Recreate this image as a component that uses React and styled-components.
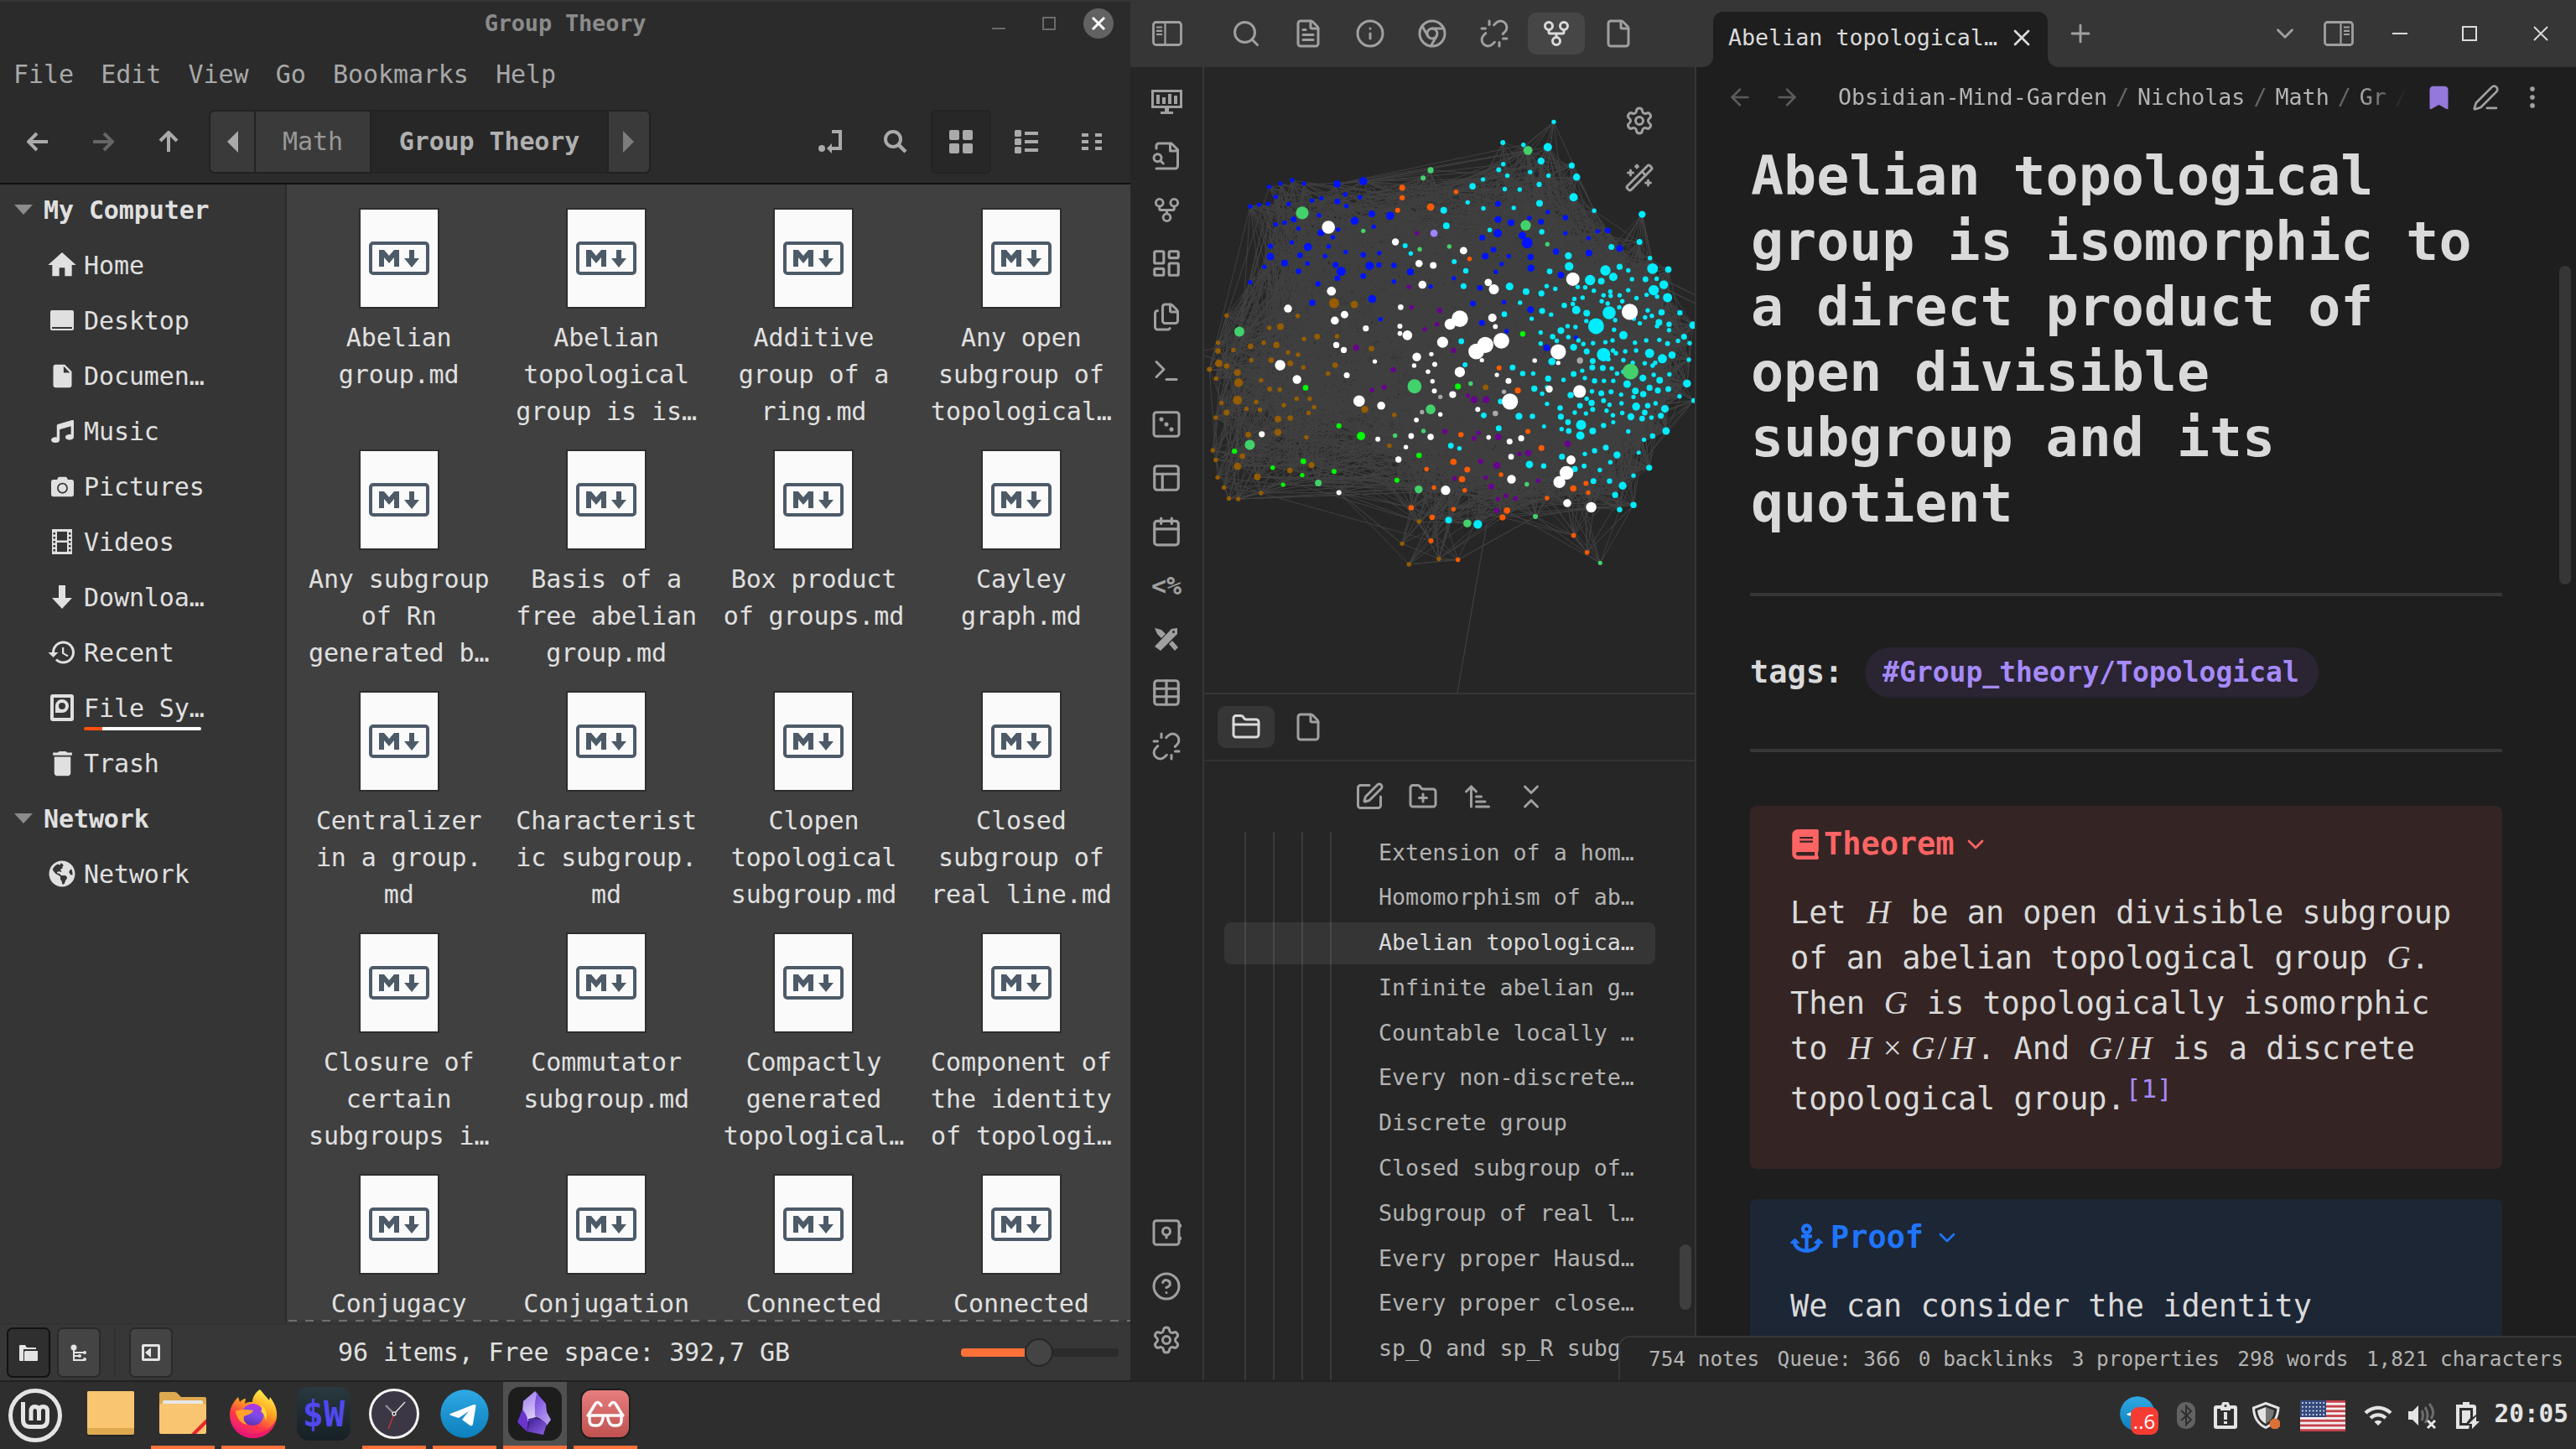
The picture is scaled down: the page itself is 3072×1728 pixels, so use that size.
import React from "react";
import styled, { createGlobalStyle, css } from "styled-components";
import {
  Search, FileText, Info, Unlink, GitFork, File, LayoutDashboard, Files, Terminal,
  PanelsTopLeft, Calendar, Table, Settings, WandSparkles, FolderClosed, SquarePen, FolderPlus,
  ArrowUpNarrowWide, ChevronsDownUp, Bookmark, PenLine, EllipsisVertical, ArrowLeft, ArrowRight, Plus, X,
  ChevronDown,
} from "lucide-react";
import { FaBook, FaAnchor, FaMusic, FaCamera, FaGlobeAmericas } from "react-icons/fa";
import { MdHome, MdInsertDriveFile, MdHistory, MdDelete, MdWifi } from "react-icons/md";

const Global = createGlobalStyle`
  * { box-sizing: border-box; }
  body { margin: 0; background: #262626; font-family: "DejaVu Sans Mono", "Liberation Mono", monospace; }
  svg { display: block; flex: none; }
`;

const Screen = styled.div`
  width: 3072px;
  height: 1728px;
  display: grid;
  grid-template: 1648px 80px / 1348px 1724px;
  overflow: hidden;
`;
const center = css`
  display: flex;
  align-items: center;
  justify-content: center;
`;

/* ---------- file manager ---------- */
const Nemo = styled.section`
  display: flex;
  flex-direction: column;
  background: #2b2b2b;
  border-top: 2px solid #363636;
  border-bottom: 2px solid #212121;
  font-size: 30px;
  letter-spacing: -0.1px;
  color: #e0e0e0;
  overflow: hidden;
`;
const TitleBar = styled.header`
  height: 54px;
  display: grid;
  grid-template-columns: 1fr auto 1fr;
  align-items: center;
  padding-bottom: 3px;
  font-size: 27px;
  font-weight: bold;
  letter-spacing: -0.2px;
  color: #8b8b8b;
`;
const WindowButtons = styled.div`
  display: flex;
  justify-content: flex-end;
  align-items: center;
  padding-right: 20px;
`;
const MenuBar = styled.nav`
  height: 64px;
  display: flex;
  align-items: center;
  gap: 32.4px;
  padding-left: 16px;
  color: #a8a8a8;
`;
const ToolBar = styled.div`
  height: 100px;
  display: flex;
  align-items: center;
  padding: 0 0 0 16px;
  border-bottom: 2px solid #101010;
  color: #aaa;
`;
const ToolButton = styled.button`
  ${center}
  width: ${(p) => p.$w || 78}px;
  height: 76px;
  padding: 0;
  border: 2px solid ${(p) => (p.$on ? "#232323" : "transparent")};
  border-radius: 6px;
  background: ${(p) => (p.$on ? "#272727" : "none")};
  color: ${(p) => (p.$dim ? "#666" : "#aaa")};
`;
const PathBar = styled.div`
  display: flex;
  height: 76px;
  margin-left: -5px;
  border: 2px solid #222;
  border-radius: 7px;
  overflow: hidden;
`;
const Crumb = styled.div`
  ${center}
  width: ${(p) => p.$w}px;
  padding-bottom: 1px;
  background: ${(p) => (p.$on ? "#272727" : "#3a3a3a")};
  color: ${(p) => (p.$on ? "#b0b0b0" : "#999")};
  font-weight: ${(p) => (p.$on ? "bold" : "normal")};
  & + & { border-left: 2px solid #222; }
`;
const Spacer = styled.div`
  flex: ${(p) => (p.$w ? `0 0 ${p.$w}px` : 1)};
`;
const NemoBody = styled.div`
  flex: 1;
  min-height: 0;
  display: grid;
  grid-template-columns: 342px 1fr;
`;
const SideBar = styled.aside`
  background: #353535;
  border-right: 2px solid #2b2b2b;
  overflow: hidden;
`;
const SideHead = styled.div`
  height: ${(p) => (p.$first ? 60 : 66)}px;
  margin-bottom: ${(p) => (p.$first ? 3 : 0)}px;
  display: flex;
  align-items: center;
  gap: 13px;
  padding-left: 17px;
  font-weight: bold;
`;
const SideItem = styled.div`
  height: 66px;
  display: flex;
  align-items: center;
  padding-left: 58px;
`;
const SideIcon = styled.span`
  ${center}
  width: 32px;
  height: 32px;
  margin-right: 10px;
`;
const SideLabel = styled.span`
  position: relative;
`;
const Usage = styled.span`
  position: absolute;
  left: 0;
  top: 40px;
  width: 140px;
  height: 4px;
  border-radius: 2px;
  background: linear-gradient(90deg, #ff4f12 22px, #fff 22px);
`;
const FileArea = styled.div`
  background: #404040;
  overflow: hidden;
  position: relative;
  display: grid;
  grid-template-columns: repeat(4, 247.4px);
  grid-auto-rows: 288px;
  align-content: start;
  padding: 28px 0 0 10px;
`;
const DashedEdge = styled.div`
  position: absolute;
  left: 2px;
  right: 0;
  bottom: 0;
  height: 4px;
  background: #383838 repeating-linear-gradient(90deg, #707070 0 10px, #383838 10px 20px) top / 100% 2px no-repeat;
`;
const FileCell = styled.div`
  display: flex;
  flex-direction: column;
  align-items: center;
  text-align: center;
  line-height: 44px;
  white-space: pre;
`;
const FilePage = styled.div`
  ${center}
  width: 96px;
  height: 120px;
  margin-bottom: 13px;
  background: #fafafa;
  border: 2px solid #2d2d2d;
`;
const StatusBar = styled.footer`
  height: 68px;
  display: flex;
  align-items: center;
  padding-left: 8px;
  background: #373737;
  border-top: 2px solid #333;
`;
const StatusButton = styled.button`
  ${center}
  width: 52px;
  height: 60px;
  padding: 0;
  margin-right: 8px;
  color: #e4e4e4;
  border: 2px solid ${(p) => (p.$on ? "#121212" : "#2a2a2a")};
  border-radius: 7px;
  background: ${(p) => (p.$on ? "#2f2f2f" : "#444")};
`;
const StatusRule = styled.div`
  width: 2px;
  height: 60px;
  margin: 0 16px 0 8px;
  background: #303030;
`;
const StatusText = styled.div`
  margin-left: 189px;
  padding-bottom: 2px;
`;
const Slider = styled.div`
  display: flex;
  align-items: center;
  width: 188px;
  margin-right: 14px;
`;
const SliderTrack = styled.div`
  flex: ${(p) => p.$grow};
  height: 10px;
  background: ${(p) => p.$c};
  border-radius: ${(p) => (p.$left ? "4px 0 0 4px" : "0 4px 4px 0")};
`;
const SliderKnob = styled.div`
  width: 34px;
  height: 34px;
  border-radius: 50%;
  background: #444;
  border: 2px solid #262626;
`;

/* ---------- notes app ---------- */
const Vault = styled.section`
  display: grid;
  grid-template: 80px 1566px 2px / 88px 587px 1049px;
  background: #262626;
  overflow: hidden;
  color: #b3b3b3;
  font-size: 26.66px;
  position: relative;
`;
const TopBar = styled.header`
  grid-column: ${(p) => p.$col};
  background: #363636;
  display: flex;
  align-items: center;
  color: #a0a0a0;
`;
const IconTab = styled.button`
  ${center}
  width: 68px;
  height: 50px;
  margin-right: 6px;
  padding: 0;
  border: 0;
  border-radius: 10px;
  color: ${(p) => (p.$on ? "#dadada" : "#a0a0a0")};
  background: ${(p) => (p.$on ? p.$bg || "#464646" : "none")};
`;
const TopToggle = styled.div`
  ${center}
  width: 86px;
  height: 80px;
  padding-left: 2px;
`;
const Ribbon = styled.nav`
  display: flex;
  flex-direction: column;
  border-right: 2px solid #363636;
  padding: 10px 0 16px;
  color: #a0a0a0;
`;
const RibbonItem = styled.div`
  ${center}
  height: 64px;
  font-size: 30px;
  font-weight: bold;
`;
const LeftPane = styled.div`
  display: flex;
  flex-direction: column;
  border-right: 2px solid #363636;
  overflow: hidden;
`;
const GraphView = styled.div`
  height: 748px;
  position: relative;
  border-bottom: 2px solid #363636;
  svg { overflow: hidden; }
`;
const GraphControls = styled.div`
  position: absolute;
  top: 30px;
  left: 475px;
  width: 92px;
  height: 136px;
  background: #262626;
  display: flex;
  flex-direction: column;
  align-items: center;
  justify-content: space-around;
  padding-right: 4px;
  color: #a0a0a0;
`;
const TabStrip = styled.div`
  height: 80px;
  display: flex;
  align-items: center;
  padding-left: 16px;
  border-bottom: 2px solid #333;
`;
const NavButtons = styled.div`
  height: 84px;
  display: flex;
  justify-content: center;
  align-items: center;
  gap: 28.4px;
  padding-left: 2px;
  color: #a0a0a0;
`;
const Tree = styled.div`
  flex: 1;
  position: relative;
  overflow: hidden;
  padding: 0 47px 0 24px;
  background:
    linear-gradient(#3b3b3b, #3b3b3b) 48px 0 / 2px 100% no-repeat,
    linear-gradient(#3b3b3b, #3b3b3b) 82px 0 / 2px 100% no-repeat,
    linear-gradient(#3b3b3b, #3b3b3b) 116px 0 / 2px 100% no-repeat,
    linear-gradient(#3b3b3b, #3b3b3b) 150px 0 / 2px 100% no-repeat;
`;
const TreeItem = styled.div`
  height: 50px;
  margin-bottom: 3.8px;
  display: flex;
  align-items: center;
  padding: 0 0 2px 184px;
  border-radius: 8px;
  white-space: pre;
  color: ${(p) => (p.$on ? "#dadada" : "#b3b3b3")};
  background: ${(p) => (p.$on ? "rgba(255,255,255,0.07)" : "none")};
`;
const TreeThumb = styled.div`
  position: absolute;
  left: 567px;
  top: 492px;
  width: 14px;
  height: 78px;
  border-radius: 7px;
  background: #3f3f3f;
`;
const Editor = styled.main`
  background: #1e1e1e;
  display: flex;
  flex-direction: column;
  position: relative;
  overflow: hidden;
  color: #dadada;
`;
const NoteTab = styled.div`
  position: relative;
  width: 399px;
  height: 66px;
  margin: 14px 0 0 20px;
  padding: 0 15px 5px 18px;
  display: flex;
  align-items: center;
  justify-content: space-between;
  border-radius: 12px 12px 0 0;
  background: #1e1e1e;
  color: #dadada;
  &::before, &::after {
    content: "";
    position: absolute;
    bottom: 0;
    width: 12px;
    height: 12px;
  }
  &::before { left: -12px; background: radial-gradient(circle at 0 0, transparent 11.5px, #1e1e1e 12px); }
  &::after { right: -12px; background: radial-gradient(circle at 100% 0, transparent 11.5px, #1e1e1e 12px); }
`;
const TopSlot = styled.div`
  ${center}
  width: ${(p) => p.$w}px;
`;
const ViewHeader = styled.div`
  height: 76px;
  flex: none;
  display: flex;
  align-items: center;
  padding: 0 34px 4px 34px;
  color: #a0a0a0;
`;
const Crumbs = styled.div`
  display: flex;
  gap: 10px;
  width: 680px;
  margin-left: 43px;
  padding-bottom: 1px;
  overflow: hidden;
  color: #b3b3b3;
  mask-image: linear-gradient(90deg, #000 91%, rgba(0, 0, 0, 0.25) 98%, transparent 100%);
  i { font-style: normal; color: #666; }
`;
const HeaderArrow = styled.span`
  ${center}
  width: 36px;
  margin-right: ${(p) => p.$r || 0}px;
  color: #5c5c5c;
`;
const HeaderTool = styled.span`
  ${center}
  width: ${(p) => p.$w || 56}px;
  margin-left: ${(p) => p.$l || 0}px;
  color: ${(p) => p.$c || "#a0a0a0"};
`;
const Note = styled.article`
  padding: 15px 88px 0 64px;
  font-size: 36.9px;
`;
const NoteTitle = styled.h1`
  margin: 0 0 69px 1px;
  font-size: 64.9px;
  line-height: 77.9px;
  font-weight: bold;
  white-space: pre;
`;
const Rule = styled.hr`
  margin: 0;
  border: 0;
  height: 4px;
  background: #363636;
`;
const TagLine = styled.div`
  height: 182px;
  display: flex;
  align-items: center;
  gap: 26px;
  padding-bottom: 1px;
  font-weight: bold;
`;
const Tag = styled.span`
  display: flex;
  align-items: center;
  height: 60px;
  width: 541px;
  padding-left: 21px;
  border-radius: 30px;
  background: #2a2433;
  color: #a68af9;
  font-size: 33px;
`;
const Callouts = styled.div`
  display: grid;
  gap: 36px;
  padding-top: 64px;
`;
const Callout = styled.section`
  height: ${(p) => p.$h}px;
  padding: 19px 48px;
  border-radius: 8px;
  background: ${(p) => p.$bg};
  line-height: 54px;
  white-space: pre;
`;
const CalloutTitle = styled.div`
  display: flex;
  align-items: center;
  height: 54px;
  margin-bottom: 28px;
  gap: ${(p) => p.$gap}px;
  font-weight: bold;
  color: ${(p) => p.$c};
  b { margin-right: ${(p) => p.$after}px; }
`;
const MathRun = styled.span`
  font-family: "Liberation Serif", serif;
  font-style: italic;
  font-size: 39px;
  line-height: 0;
`;
const Sym = styled.span`
  display: inline-block;
  width: ${(p) => p.$w}px;
  text-align: center;
  font-style: ${(p) => (p.$up ? "normal" : "italic")};
`;
const LastLine = styled.div`
  padding-top: 6px;
`;
const Foot = styled.sup`
  color: #a68af9;
  font-size: 31px;
  line-height: 0;
  vertical-align: 14px;
`;
const NoteThumb = styled.div`
  position: absolute;
  right: 6px;
  top: 237px;
  width: 14px;
  height: 380px;
  border-radius: 7px;
  background: #363636;
`;
const NoteStatus = styled.footer`
  position: absolute;
  right: 0;
  bottom: 2px;
  height: 53px;
  width: 1142px;
  display: flex;
  align-items: center;
  gap: 21.4px;
  padding-left: 34px;
  white-space: nowrap;
  font-size: 24.4px;
  color: #b3b3b3;
  background: #262626;
  border: 2px solid #363636;
  border-width: 2px 0 0 2px;
  border-top-left-radius: 14px;
`;
const BottomLine = styled.div`
  grid-column: 1 / -1;
  background: #212121;
`;

/* ---------- desktop panel ---------- */
const Panel = styled.footer`
  grid-column: 1 / -1;
  display: flex;
  align-items: center;
  background: #2e2e2e;
`;
const Launcher = styled.div`
  ${center}
  width: 76px;
  height: 80px;
  margin-right: 8px;
  padding-bottom: ${(p) => (p.$dot ? 0 : 4)}px;
  padding-right: ${(p) => p.$pull || 0}px;
  background: ${(p) => (p.$on ? "#505050" : "none")};
  border-bottom: ${(p) => (p.$dot ? "4px solid #ff7139" : "0")};
`;
const MenuSlot = styled.div`
  ${center}
  width: 84px;
  margin-right: 12px;
`;
const ScriptTile = styled.div`
  ${center}
  width: 64px;
  height: 64px;
  border-radius: 14px;
  background: linear-gradient(#2a3840, #162024);
  color: #5148f0;
  font-size: 42px;
  font-weight: bold;
`;
const Tray = styled.div`
  display: flex;
  align-items: center;
  color: #e4e4e4;
`;
const TraySlot = styled.span`
  ${center}
  width: ${(p) => p.$w}px;
  margin-right: ${(p) => p.$r}px;
`;
const Badge = styled.span`
  position: relative;
  width: 46px;
  height: 46px;
`;
const BadgeCount = styled.b`
  ${center}
  position: absolute;
  right: 0;
  bottom: 0;
  width: 33px;
  height: 33px;
  border-radius: 9px;
  background: #f63b33;
  color: #fff;
  font: 24px "Open Sans", sans-serif;
`;
const Clock = styled.time`
  font-size: 29.4px;
  font-weight: bold;
  padding: 0 9px 4px 0;
`;

/* ---------- drawings ---------- */
const Svg = ({ w = 32, h = w, box = "0 0 32 32", children, ...rest }) => (
  <svg width={w} height={h} viewBox={box} fill="currentColor" {...rest}>{children}</svg>
);
const line = { fill: "none", stroke: "currentColor", strokeWidth: 2, strokeLinecap: "round", strokeLinejoin: "round" };
const Arrow = ({ turn }) => (
  <Svg w={26} box="0 0 26 26">
    <path d="M2 13H25M12 3L2 13L12 23" fill="none" stroke="currentColor" strokeWidth="4" transform={`rotate(${turn} 13 13)`} />
  </Svg>
);
const Caret = ({ turn = 0, c = "#aaa" }) => (
  <Svg w={14} h={26} box="0 0 14 26" fill={c}><path d="M14 0V26L1 13Z" transform={`rotate(${turn} 7 13)`} /></Svg>
);
const Markdown = () => (
  <Svg w={72} h={40} box="0 0 72 40" fill="#4d5a68">
    <rect x="2" y="2" width="68" height="36" rx="3" fill="none" stroke="#4d5a68" strokeWidth="4" />
    <path d="M12 30V10H18L24 17L30 10H36V30H30V19L24 26L18 19V30Z M48 10H54V20H60L51 31L42 20H48Z" />
  </Svg>
);
const PanelIcon = ({ right }) => (
  <Svg w={36} h={30} box="0 0 36 30">
    <g fill="none" stroke="currentColor" strokeWidth="2.8" transform={right ? "translate(36 0) scale(-1 1)" : undefined}>
      <rect x="1.500" y="1.500" width="33" height="27" rx="3" />
      <path d="M15.500 2V28M5 7.500H12M5 11.800H12M5 16H12" strokeWidth="2.2" />
    </g>
  </Svg>
);
const ChromeIcon = () => (
  <Svg w={36} box="0 0 24 24"><g {...line}>
    <circle cx="12" cy="12" r="10" /><circle cx="12" cy="12" r="4" />
    <path d="M21.17 8H12M3.95 6.06L8.54 14M10.88 21.94L15.46 14" />
  </g></Svg>
);
const DocSearch = () => (
  <Svg w={36} box="0 0 24 24"><g {...line}>
    <path d="M4 22H19A2 2 0 0 0 21 20V7L16 2H6A2 2 0 0 0 4 4V6M15 2V8H21" />
    <circle cx="5" cy="13.500" r="3" /><path d="M9.500 18L7.300 15.800" />
  </g></Svg>
);
const DiceIcon = () => (
  <Svg w={36} box="0 0 24 24">
    <rect x="2" y="2.500" width="20" height="19" rx="2" {...line} />
    <circle cx="8" cy="8" r="1.700" /><circle cx="12" cy="12" r="1.700" /><circle cx="16" cy="16" r="1.700" />
  </Svg>
);
const MonitorChart = () => (
  <Svg w={37} h={30} box="0 0 37 30">
    <path fillRule="evenodd" d="M0 0H37V22H21V26H26V29H11V26H16V22H0ZM3 3V19H34V3Z" />
    <path d="M6 6H10V17H6ZM13 9H17V17H13ZM20 5H24V17H20ZM27 7H31V17H27Z" />
  </Svg>
);
const PenRuler = () => (
  <Svg w={30} h={30} box="0 0 30 30">
    <path d="M1 2L9 4L14 9L9 14L4 9ZM18 21L22 17L29 25L25 29Z" />
    <path fillRule="evenodd" d="M28 2V9L8 29L1 24L21 3ZM23.500 5A1.500 1.500 0 1 0 23.500 8A1.500 1.500 0 1 0 23.500 5Z" />
  </Svg>
);
const SafeIcon = () => (
  <Svg w={36} h={36} box="0 0 24 24"><g {...line}>
    <rect x="2" y="2.500" width="20" height="19" rx="2" /><circle cx="12" cy="11" r="3" /><path d="M12 14V16M23 6V7M23 16V17" />
  </g></Svg>
);
const HelpIcon = () => (
  <Svg w={36} box="0 0 24 24"><g {...line}>
    <circle cx="12" cy="12" r="10" /><path d="M9.100 9a3 3 0 0 1 5.800 1c0 2-3 3-3 3M12 17h.01" />
  </g></Svg>
);
const MintIcon = () => (
  <Svg w={64} box="0 0 64 64">
    <circle cx="32" cy="32" r="29.500" fill="none" stroke="#e4e4e4" strokeWidth="5" />
    <path d="M17.500 16V37Q17.500 45.500 26 45.500H38Q46.500 45.500 46.500 37V27Q46.500 21.500 41.500 21.500Q36.500 21.500 36.500 27V38M36.500 27Q36.500 21.500 31.500 21.500Q27 21.500 27 27V38" fill="none" stroke="#e4e4e4" strokeWidth="5" />
  </Svg>
);
const DesktopIcon = () => (
  <Svg w={56} h={54} box="0 0 56 54">
    <rect width="56" height="54" rx="2" y="0" fill="#222" /><rect width="56" height="52" rx="2" fill="#dfa950" /><path d="M2 0H54Q56 0 56 2V44H0V2Q0 0 2 0Z" fill="#f9c571" />
  </Svg>
);
const FolderIcon = () => (
  <Svg w={56} h={52} box="0 0 56 52">
    <path d="M0 2Q0 0 2 0H18Q21 0 23 3L26 6H54Q56 6 56 8V30H0Z" fill="#dfa950" />
    <rect x="4" y="10" width="48" height="10" rx="2" fill="#e6e6e6" />
    <path d="M0 16Q0 14 2 14H54Q56 14 56 16V48Q56 50 54 50H2Q0 50 0 48Z" fill="#f9c571" />
    <path d="M38 50L56 32V38L44 50Z" fill="#e9262b" />
  </Svg>
);
const FirefoxIcon = () => (
  <Svg w={58} h={60} box="0 0 58 60">
    <defs>
      <linearGradient id="ffa" x1="0.8" y1="0.05" x2="0.3" y2="1"><stop offset="0" stopColor="#fff44f" /><stop offset="0.35" stopColor="#ffa41f" /><stop offset="0.68" stopColor="#ff3647" /><stop offset="1" stopColor="#e31587" /></linearGradient>
      <linearGradient id="ffb" x1="0.6" y1="0" x2="0.3" y2="1"><stop offset="0" stopColor="#b833e1" /><stop offset="0.5" stopColor="#7a4be8" /><stop offset="1" stopColor="#5b2fae" /></linearGradient>
    </defs>
    <path d="M37 1C42 7 44 9 48 14L49 10C55 18 58 26 57 34C55 49 43 59 29 59C13 59 1 47 1 31C1 23 5 16 11 10L13 16C15 14 17 12 20 12L19 18C22 16 25 16 28 16C28 10 32 4 37 1Z" fill="url(#ffa)" />
    <circle cx="28.500" cy="31" r="13" fill="url(#ffb)" />
    <path d="M8 27C14 24 22 25 29 26C28 30 22 31 18 33C17 36 18 40 22 43C14 42 9 35 8 27Z" fill="#ffa32a" />
    <path d="M36 18C44 22 47 30 44 38C43 34 42 30 38 27C41 24 38 20 36 18Z" fill="#ffd83d" />
    <path d="M2 36C6 50 18 55 30 54C43 53 52 46 56 37C54 50 43 59 29 59C15 59 4 49 2 36Z" fill="#e5146f" opacity="0.750" />
  </Svg>
);
const ClockIcon = () => (
  <Svg w={60} box="0 0 60 60">
    <circle cx="30" cy="30" r="28.500" fill="#3b3745" stroke="#f6f4f2" strokeWidth="3" />
    <path d="M30 30L20 20" stroke="#999" strokeWidth="2" /><path d="M30 30L43 16" stroke="#eee" strokeWidth="1.200" /><path d="M30 30L23 48" stroke="#d33" strokeWidth="1.200" />
    <circle cx="30" cy="30" r="2" fill="#222" stroke="#ddd" strokeWidth="1.500" />
  </Svg>
);
const TelegramIcon = ({ w = 58 }) => (
  <Svg w={w} box="0 0 58 58">
    <defs><linearGradient id="tg" x2="0" y2="1"><stop stopColor="#2fa8e4" /><stop offset="1" stopColor="#0b80bd" /></linearGradient></defs>
    <circle cx="29" cy="29" r="28.700" fill="url(#tg)" />
    <path d="M12 29L40 18Q43 17.500 42.500 20L39 41Q38.500 44.500 35.500 43L26 36L34 26L22 34L13 31Q10 30 12 29Z" fill="#fff" />
  </Svg>
);
const ObsidianIcon = () => (
  <Svg w={64} box="0 0 64 64">
    <defs>
      <linearGradient id="ob1" x2="0.3" y2="1"><stop stopColor="#9b7be8" /><stop offset="1" stopColor="#e0d2fb" /></linearGradient>
      <linearGradient id="ob2" x2="0.6" y2="1"><stop stopColor="#6a3bd8" /><stop offset="1" stopColor="#b79af3" /></linearGradient>
      <linearGradient id="ob3" x2="1" y2="1"><stop stopColor="#3f1c96" /><stop offset="1" stopColor="#8d64e4" /></linearGradient>
    </defs>
    <rect width="64" height="64" rx="14" fill="#1d1d1d" />
    <path d="M18 17L32 5L36 9Q30 22 33 36Q26 37 20 45L17 30Z" fill="url(#ob1)" />
    <path d="M32 5L45 20L46 30L51 39L46 46Q40 37 33 36Q30 22 34 9Z" fill="url(#ob2)" />
    <path d="M17 27Q27 38 22 53L11 42Z" fill="#6a35cf" />
    <path d="M24 38Q38 35 46 44L42 57L22 53Q26 46 24 38Z" fill="url(#ob3)" />
  </Svg>
);
const GlassesIcon = () => (
  <Svg w={60} box="0 0 60 60">
    <defs><linearGradient id="gl" x2="0" y2="1"><stop stopColor="#e87e7e" /><stop offset="1" stopColor="#bf5050" /></linearGradient></defs>
    <rect x="1" y="1" width="58" height="58" rx="12" fill="url(#gl)" stroke="#1e1e1e" strokeWidth="2" />
    <g fill="none" stroke="#fff" strokeWidth="3.400" strokeLinecap="round" strokeLinejoin="round">
      <path d="M10 31L18 18Q21 14 25 20M50 31L42 18Q39 14 35 20" />
      <path d="M9 32H51M11 33V38Q11 44 17 44H20Q26 44 27.500 33M32.500 33Q34 44 40 44H43Q49 44 49 38V33" />
    </g>
  </Svg>
);
const FlagIcon = () => (
  <Svg w={54} h={37} box="0 0 54 37">
    <rect width="54" height="37" rx="2" fill="#f4f0f0" />
    {[0, 1, 2, 3, 4, 5, 6].map((i) => <rect key={i} y={i * 5.7} width="54" height="2.850" fill="#c5434c" />)}
    <rect width="31" height="20" fill="#34497c" />
    {Array.from({ length: 28 }, (_, i) => <circle key={i} cx={3 + (i % 7) * 4.2} cy={3 + Math.floor(i / 7) * 4.7} r="1" fill="#e6e9f2" />)}
  </Svg>
);

/* ---------- graph data: x, y, optional radius ---------- */
const SX = 0.4464;
const SY = 0.5485;
const groups = {
  "#0013ff": "338,449 362,445 386,443 389,406 419,399 450,392 482,399 406,428 441,444 570,400,4.4 640,394,4.8 592,423 571,438,3.5 631,429 595,448 528,431 503,436 712,469,4.8 663,465,4 668,493 617,480,4.8 522,468 573,499 527,506,4 559,516 454,477,3.5 430,484 406,488 467,497 392,535,3.2 392,558,4.5 449,527 376,580 430,572,4 471,555,3.4 491,573 467,590,3.3 492,537,4.8 548,536 538,557 566,576,3.6 581,590,5.5 571,605,3.4 593,548 640,554,3.4 683,550 657,578,5 682,576,3.2 640,600,3.4 722,577,3.2 722,612 766,591,4.2 820,623 338,614 519,617,3.2 504,658,3.7 664,650,4.8 686,694 882,605 952,626,3.4 933,660,3.4 957,702,3.5 1016,657 994,591 1010,574 1029,557 988,543,3.4 966,557,4 958,517,3.5 999,507,5 1000,477,4 1000,443,3.5 1035,484,4 1065,512,4.5 1078,528,6.5 1087,559,3.8 1088,583,4.2 1084,474 1115,482,3.5 1133,461 1180,473,3.3 1180,507 1155,547,3.7 1168,598,4 1242,518 1266,503 1293,501,3.5 1325,540,4 1243,550,4 1087,673,4 1130,756,4 1208,734 1023,720",
  "#955c00": "275,686 419,710,4 389,713 465,687 252,745 252,763,3.3 229,803,3 254,790,4.5 293,761 339,753,3.4 374,745 408,750,3.8 439,766 466,771 482,737 517,732,3.4 570,731 562,659,6 616,662,4.4 662,758,3.3 275,796,3.3 247,823 304,810,4 341,783 394,783,3.3 445,790,3.5 480,799 565,794,3.3 546,812 307,832,5.2 367,827 390,846,3 417,847 304,870,5.5 261,876 275,897,3.4 246,908 328,889 354,874 364,891 428,881 462,867 497,867 509,885 494,898 412,911,4 445,909,3.3 412,940,4.2 488,951 333,945,3.4 238,979 246,1000 317,992,3.3 304,1014,4.4 357,1037,4 251,1038 268,1060 281,1084 306,1085 367,1072 444,1023,3.3 502,1011,3.6 644,890,4.2 723,902 710,969 967,842,3.4 789,1134 744,1182 762,1227 842,1215",
  "#00ecff": "1149,265 1013,310,3 1068,315 1133,320,5 1014,357 1002,369,3 1025,382 1115,350,4.2 1086,374 1135,382 1197,360,3.6 1210,385,4.3 960,390 932,405,3.8 1018,411 1058,412 1110,401,3.1 1202,429,5 1111,442,4 1042,452 919,440 961,453 1257,458 855,457,4 862,491,4 978,500 1117,504,3.2 1385,466,4.2 1378,526,3.5 752,534,3 767,551 883,569,3 914,589,3.3 908,622,3.5 1188,556,4.2 1190,579,5.2 1303,537,3.5 1138,590,3.4 1246,609,6.2 1276,611,4 1287,588,6.2 1308,602,5 1325,580,3.6 1348,588 1358,607 1406,561 1413,584,6.4 1455,586,3.8 1394,607,3.5 1424,606 1443,619,5.2 1416,631,6.2 1453,647,5.5 1425,645 1130,622 1153,628 1031,623,4.6 1075,634,4 1116,638,3.6 1233,625 1213,624 1256,632 1300,634 1282,642 1301,643 1325,642 1348,631 1397,641 1370,648 1226,647 1277,655 1332,655 1204,650 1177,664,3.3 1324,668 1293,660 1059,658 1017,683,3.4 1090,693 1118,676,3.6 1142,684 1200,661 1209,674,5 1237,681,4 1297,680,7.8 1262,709,9.5 1400,675 1437,679,3.8 1486,680,3.2 1411,687 1393,690 1430,701,4 1457,705,3.2 1457,718 1521,707,4.5 1497,732,3.5 1512,746 1481,741 1425,709 1379,703 1363,693 1313,696 1335,729,5 1310,717 1236,698 1186,709 1207,711 1168,719,4 1146,732,3.3 1114,723 1114,747 1188,733 1215,740 1228,748 1157,741 1202,755,4.2 1237,764,3.6 1254,746 1287,744 1306,740 1366,745 1396,740 1431,739 1453,747,3 1282,771,8 1315,768 1307,762 1340,764 1369,762 1405,768,5.5 1439,780,5.5 1465,772,4.4 1510,782 1144,786,4.4 1253,785,3.5 1295,781 1335,783 1360,789 1392,790 1413,795 1420,789 1252,799,3.5 1225,806 1280,800,3.6 1304,801 1318,812 1335,808 1387,822,4.2 1416,815 1432,827,4 1458,814 1505,834,4.8 1039,799,3.5 1066,812,3.2 1094,812 1134,823,3.7 1131,842 1175,826 1202,813,3.5 1258,828,3.2 1232,822 1283,828 1308,828 1345,835,4.5 1367,850,4 1405,843,3.6 1427,849,3.6 1388,857,3.8 1455,846,3.5 1485,862 1523,871,3 1097,845,3.7 1118,856 1194,859,3.7 1251,851 1276,855,3.5 1302,852,3 1329,858 1362,863 1237,867 1250,876,3.8 1219,882,3.4 1282,871,3 1298,880 1330,877 1369,884,4.8 1400,882,3.3 1421,877 1446,889,4.6 1435,904,3.6 1410,908 1392,897,3.4 1355,906,4.2 1385,910,3.4 1332,898 1307,903 1290,893 1253,890,3 1235,899 1205,897 1166,887,3.3 1131,878 1092,905,3.2 1056,905,4.2 1168,906,3.6 1187,918,3.4 1222,924,6 1253,937,4 1220,947,5 1189,937,3.4 1170,933 1123,927,2.5 1282,925,3.2 1308,918,2.5 1348,938 1390,956 1413,948,3.2 1449,937,4.5 1002,931,3.5 962,903,3.4 874,969,3.4 897,975 1288,973,3.5 1258,980,3.2 1232,987 1318,989,4.2 1171,993,3.6 1300,1005 1376,984,2.5 1404,1017,3.6 1362,1034 1333,1056,4.7 1298,1046,3.2 1272,1022 1230,1013,3 1205,1020,3.6 1255,1046,3.5 1313,1076,3.6 1362,1098,3.7 1325,1108,3.2 1122,1013,3.2 1084,1010,4.4 868,1131,4 946,1140,5.2 902,742,3.4 1007,873,3.3 912,793,3",
  "#43d16c": "1080,327,5.4 820,370,3.6 800,387,3 477,463,7.6 640,502 1074,490,6.2 1132,531 870,536 791,542 309,721,6 777,840,8.4 820,890,5.8 927,834 337,967,6 1354,808,9.4 801,937 725,947 788,1064,4.7 520,1050,4 918,1138,4.8 1100,1123,3 1077,1053 1273,1224,2.6",
  "#00fa00": "486,843,3.4 575,926,3.1 634,948,5 296,981,3.2 480,1003,3.3 398,1017 477,1033 426,1054 562,1025,3 789,990,3.3 730,1044,3 893,840,3.6 1066,726,3.2",
  "#ff5a00": "744,408,3.6 744,430,3.2 732,457,3 820,450,4.4 888,417,2.8 924,563 1003,800,3 1053,849,3.6 901,945,3.2 881,1004,3.8 809,1020 918,1021,3.5 904,1042,3.8 829,1060 911,1066 768,1104,3.3 881,1107 824,1125,3.3 821,1176,3 893,1217,2.8 1008,1032 1024,1110,3.8 1012,1125,3.6 1080,938,3 1116,974,3.5 1131,1083 1201,1062,3.8 1235,1051,3 1241,1071 1202,1164,2.9 1238,1201,2.8",
  "#690090": "783,507 762,624 769,668 844,675,3.2 837,705 804,716 621,756,3.6 881,762,3.1 720,804,3.1 696,842,3 664,848 919,860,2.6 936,869,4.2 968,869,4.2 858,938,3 948,941 936,953,3 1001,950,3.8 954,1003,3 997,1012,4.2 967,1038 982,1058,3.5 884,1040 1081,985,3.8 1057,987 1186,965,3.8 1107,1045,2.6 1021,1078 1000,1085 1047,1084 997,1110,3.2",
  "#a8a8ae": "846,863,2.6 1016,852,2.7 797,896,2.6 993,899,3.3 1219,784,3.7",
  "#9f83ff": "829,507,4.4",
  "#ffffff": "547,494,7.8 726,526,4.2 908,545,4.4 789,573,4.3 827,577,4 798,619,4.8 555,633,5.4 439,671,4.8 590,684,4.5 564,697,4.8 647,714,3.6 740,668,3.3 738,709,3 738,725,2.8 758,729,5.8 898,693,9.8 872,705,6.6 974,614,4.4 989,629,6 985,691,5 993,710,2.9 852,744,6.6 942,764,9.4 966,750,9.6 1009,741,9.4 957,783,2.6 568,750,3.7 588,761,3.6 671,786 418,794,6.2 463,825,5.2 596,816,3.5 783,776,5.2 822,770 776,795 831,792,3 813,808 898,809,6.2 825,829,2.7 830,850,3 879,858,4.1 846,901 629,872,6.8 688,882,4.8 369,944,3.6 679,955,3 768,948,3.4 820,950,3.8 754,972 782,913,2.9 734,999,3.7 575,1071,3 860,1066,5.6 946,890,3 1032,873,9.6 1028,828,3.5 997,815,2.6 1098,784,2.8 1161,789,2.6 1137,846,4.2 1161,765,9.2 1200,607,8 1352,678,9.6 1218,851,7.6 975,951,2.8 1031,960,3.5 1062,953,3.6 1035,993,3.4 1036,1042,5.2 1195,1000,5.4 1183,1028,8.2 1164,1048,7.2 1185,1094,4.8 1249,1103,6.2",
};
const nodes = Object.entries(groups).flatMap(([fill, text]) =>
  text.split(" ").map((t) => {
    const [x, y, r = 2.7] = t.split(",").map(Number);
    return { x: (x - 215) * SX, y: y * SY - 80, r, fill };
  })
);
const edges = (() => {
  let seed = 7;
  const rnd = () => ((seed = (seed * 16807) % 2147483647) / 2147483647);
  const out = [];
  nodes.forEach((a) => {
    const near = nodes
      .map((b) => ({ b, d: Math.hypot(a.x - b.x, a.y - b.y) }))
      .sort((p, q) => p.d - q.d);
    const outlier = near[6].d > 42;
    const reach = outlier ? 26 : 330;
    const count = outlier ? 8 : 6 + Math.round(a.r * 2.2);
    for (let k = 0; k < count; k++) {
      const pick = near[1 + Math.floor(Math.pow(rnd(), outlier ? 1 : 1.25) * reach)];
      const peak = pick.b.y < 120 || pick.b.y > 535;
      if (pick.d < (peak ? 110 : 280)) out.push(`M${a.x.toFixed(1)} ${a.y.toFixed(1)}L${pick.b.x.toFixed(1)} ${pick.b.y.toFixed(1)}`);
    }
  });
  return out.join("");
})();
const Graph = () => (
  <svg width="585" height="746" viewBox="0 0 585 746">
    <path d={edges} fill="none" stroke="#404040" strokeWidth="1" />
    <path d="M337 545L302 746M586 282L500 240M0 338L80 320M0 344L90 372M586 272L510 235M55 257L81 176M161 508L247 525" stroke="#404040" fill="none" strokeWidth="1.200" />
    {nodes.map((n, i) => <circle key={i} cx={n.x} cy={n.y} r={n.r} fill={n.fill} />)}
  </svg>
);

const places = [
  ["Home", <MdHome size={40} />], ["Desktop", <Svg w={28} h={24} box="0 0 28 24"><path fillRule="evenodd" d="M2 0H26Q28 0 28 2V22Q28 24 26 24H2Q0 24 0 22V2Q0 0 2 0ZM2 20V22H26V20Z" /></Svg>],
  ["Documen…", <MdInsertDriveFile size={33} />], ["Music", <FaMusic size={27} />], ["Pictures", <FaCamera size={27} />],
  ["Videos", <Svg w={24} h={30} box="0 0 24 30"><path fillRule="evenodd" d="M0 0H24V30H0ZM6 3V13.500H18V3ZM6 16V27H18V16ZM1.500 4V6.500H4V4ZM1.500 9V11.500H4V9ZM1.500 14V16.500H4V14ZM1.500 19V21.500H4V19ZM1.500 24V26.500H4V24ZM20 4V6.500H22.500V4ZM20 9V11.500H22.500V9ZM20 14V16.500H22.500V14ZM20 19V21.500H22.500V19ZM20 24V26.500H22.500V24Z" /></Svg>],
  ["Downloa…", <Svg w={24} h={28} box="0 0 24 28"><path d="M8 0H16V15H24L12 28L0 15H8Z" /></Svg>], ["Recent", <MdHistory size={36} />],
  ["File Sy…", <Svg w={28} h={32} box="0 0 28 32"><path fillRule="evenodd" d="M3 0H25Q28 0 28 3V29Q28 32 25 32H3Q0 32 0 29V3Q0 0 3 0ZM4 4V28H24V4Z" /><path fillRule="evenodd" d="M6 14A8 8 0 1 1 14 22H6ZM14 10A4 4 0 1 0 14 18A4 4 0 1 0 14 10Z" /></Svg>],
  ["Trash", <MdDelete size={39} />],
];
const files = [
  "Abelian\ngroup.md", "Abelian\ntopological\ngroup is is…", "Additive\ngroup of a\nring.md", "Any open\nsubgroup of\ntopological…",
  "Any subgroup\nof Rn\ngenerated b…", "Basis of a\nfree abelian\ngroup.md", "Box product\nof groups.md", "Cayley\ngraph.md",
  "Centralizer\nin a group.\nmd", "Characterist\nic subgroup.\nmd", "Clopen\ntopological\nsubgroup.md", "Closed\nsubgroup of\nreal line.md",
  "Closure of\ncertain\nsubgroups i…", "Commutator\nsubgroup.md", "Compactly\ngenerated\ntopological…", "Component of\nthe identity\nof topologi…",
  "Conjugacy", "Conjugation", "Connected", "Connected",
];
const treeItems = [
  "Extension of a hom…", "Homomorphism of ab…", "Abelian topologica…", "Infinite abelian g…", "Countable locally …", "Every non-discrete…",
  "Discrete group", "Closed subgroup of…", "Subgroup of real l…", "Every proper Hausd…", "Every proper close…", "sp_Q and sp_R subg",
];

const SideTriangle = () => <Svg w={22} h={12} box="0 0 22 12" fill="#8c8c8c"><path d="M0 0H22L11 12Z" /></Svg>;

const FileManager = () => (
  <Nemo>
    <TitleBar>
      <span />
      <span>Group Theory</span>
      <WindowButtons>
        <Svg w={60} h={16} box="0 0 60 16" fill="#6a6a6a"><path d="M0 13H16V15H0Z" /></Svg>
        <Svg w={49} h={16} box="0 0 49 16"><rect x="1" y="1" width="14" height="14" fill="none" stroke="#6a6a6a" strokeWidth="2" /></Svg>
        <Svg w={36} h={36} box="0 0 36 36"><circle cx="18" cy="18" r="18" fill="#626262" /><path d="M11 11L25 25M25 11L11 25" stroke="#fff" strokeWidth="3" /></Svg>
      </WindowButtons>
    </TitleBar>
    <MenuBar>{["File", "Edit", "View", "Go", "Bookmarks", "Help"].map((m) => <span key={m}>{m}</span>)}</MenuBar>
    <ToolBar>
      <ToolButton $w={58}><Arrow turn={0} /></ToolButton>
      <ToolButton $w={98} $dim><Arrow turn={180} /></ToolButton>
      <ToolButton $w={58}><Arrow turn={90} /></ToolButton>
      <Spacer $w={24} />
      <PathBar>
        <Crumb $w={52}><Caret /></Crumb>
        <Crumb $w={138}>Math</Crumb>
        <Crumb $w={283} $on>Group Theory</Crumb>
        <Crumb $w={50}><Caret turn={180} c="#7c7c7c" /></Crumb>
      </PathBar>
      <Spacer />
      <ToolButton><Svg w={28} box="0 0 28 28"><circle cx="4" cy="22" r="4" /><path d="M16 2H26V22H14" fill="none" stroke="currentColor" strokeWidth="4" /><path d="M10 22L16 16V28Z" /></Svg></ToolButton>
      <ToolButton><Svg w={28} box="0 0 28 28"><circle cx="11" cy="11" r="9" fill="none" stroke="currentColor" strokeWidth="4" /><path d="M17 17L26 26" stroke="currentColor" strokeWidth="4.500" /></Svg></ToolButton>
      <Spacer $w={3} />
      <ToolButton $w={72} $on><Svg w={28} box="0 0 28 28"><rect width="12" height="12" rx="2" /><rect x="16" width="12" height="12" rx="2" /><rect y="16" width="12" height="12" rx="2" /><rect x="16" y="16" width="12" height="12" rx="2" /></Svg></ToolButton>
      <Spacer $w={3} />
      <ToolButton><Svg w={28} box="0 0 28 28"><rect width="8" height="8" rx="1.500" /><rect y="10" width="8" height="8" rx="1.500" /><rect y="20" width="8" height="8" rx="1.500" /><path d="M12 2H28V6H12ZM12 12H28V16H12ZM12 22H28V26H12Z" /></Svg></ToolButton>
      <ToolButton><Svg w={24} h={20} box="0 0 24 20"><path d="M0 0H8V4H0ZM0 8H8V12H0ZM0 16H8V20H0ZM16 0H24V4H16ZM16 8H24V12H16ZM16 16H24V20H16Z" /></Svg></ToolButton>
      <Spacer $w={7} />
    </ToolBar>
    <NemoBody>
      <SideBar>
        <SideHead $first><SideTriangle />My Computer</SideHead>
        {places.map(([name, icon]) => (
          <SideItem key={name}>
            <SideIcon>{icon}</SideIcon>
            <SideLabel>{name}{name === "File Sy…" && <Usage />}</SideLabel>
          </SideItem>
        ))}
        <SideHead><SideTriangle />Network</SideHead>
        <SideItem><SideIcon><FaGlobeAmericas size={32} /></SideIcon><SideLabel>Network</SideLabel></SideItem>
      </SideBar>
      <FileArea>
        {files.map((f, i) => <FileCell key={i}><FilePage><Markdown /></FilePage>{f}</FileCell>)}
        <DashedEdge />
      </FileArea>
    </NemoBody>
    <StatusBar>
      <StatusButton $on><Svg w={22} h={19} box="0 0 22 19"><path d="M0 1Q0 0 1 0H7L9 3H20V5H5V19H1Q0 19 0 18ZM7 7H22V18Q22 19 21 19H6V8Z" /></Svg></StatusButton>
      <StatusButton><Svg w={20} h={20} box="0 0 20 20"><circle cx="4" cy="4" r="3.500" /><path d="M3 4H5V9H17V11H5V13H11V15H5V18H17V20H3Z" /><circle cx="17" cy="10" r="2" /><circle cx="11" cy="14" r="2" /><circle cx="17" cy="18" r="2" /></Svg></StatusButton>
      <StatusRule />
      <StatusButton><Svg w={22} h={20} box="0 0 22 20"><path fillRule="evenodd" d="M2 0H20Q22 0 22 2V18Q22 20 20 20H2Q0 20 0 18V2Q0 0 2 0ZM3 3V17H19V3Z" /><path d="M4 10L11 4V16Z" /></Svg></StatusButton>
      <StatusText>96 items, Free space: 392,7 GB</StatusText>
      <Spacer />
      <Slider><SliderTrack $grow={76} $c="#ff7139" $left /><SliderKnob /><SliderTrack $grow={78} $c="#2b2b2b" /></Slider>
    </StatusBar>
  </Nemo>
);

const topTabs = [<Search size={36} />, <FileText size={36} />, <Info size={36} />, <ChromeIcon />, <Unlink size={36} />, <GitFork size={36} />, <File size={36} />];
const ribbonTop = [
  <MonitorChart />, <DocSearch />, <GitFork size={35} />, <LayoutDashboard size={38} />, <Files size={36} />, <Terminal size={36} />,
  <DiceIcon />, <PanelsTopLeft size={38} />, <Calendar size={38} />, "<%", <PenRuler />, <Table size={38} />, <Unlink size={36} />,
];
const H = () => <Sym $w={33}>H</Sym>;
const G = () => <Sym $w={29.5}>G</Sym>;
const Slash = () => <Sym $w={16} $up>/</Sym>;

const NotesApp = () => (
  <Vault>
    <TopBar $col="1 / 3">
      <TopToggle><PanelIcon /></TopToggle>
      <Spacer $w={18} />
      {topTabs.map((icon, i) => <IconTab key={i} $on={i === 5}>{icon}</IconTab>)}
    </TopBar>
    <TopBar $col="3">
      <NoteTab><span>Abelian topological…</span><X size={32} /></NoteTab>
      <TopSlot $w={78}><Plus size={34} /></TopSlot>
      <Spacer />
      <TopSlot $w={62}><ChevronDown size={34} /></TopSlot>
      <TopSlot $w={66}><PanelIcon right /></TopSlot>
      <TopSlot $w={80}><Svg w={18} h={2} box="0 0 18 2" fill="#ddd"><path d="M0 0H18V2H0Z" /></Svg></TopSlot>
      <TopSlot $w={86}><Svg w={18} h={18} box="0 0 18 18"><rect x="1" y="1" width="16" height="16" fill="none" stroke="#ddd" strokeWidth="2" /></Svg></TopSlot>
      <TopSlot $w={84}><Svg w={18} h={18} box="0 0 18 18"><path d="M1 1L17 17M17 1L1 17" stroke="#ddd" strokeWidth="1.800" /></Svg></TopSlot>
    </TopBar>
    <Ribbon>
      {ribbonTop.map((icon, i) => <RibbonItem key={i}>{icon}</RibbonItem>)}
      <Spacer />
      <RibbonItem><SafeIcon /></RibbonItem>
      <RibbonItem><HelpIcon /></RibbonItem>
      <RibbonItem><Settings size={36} /></RibbonItem>
    </Ribbon>
    <LeftPane>
      <GraphView>
        <Graph />
        <GraphControls><Settings size={36} /><WandSparkles size={36} /></GraphControls>
      </GraphView>
      <TabStrip>
        <IconTab $on $bg="#363636"><FolderClosed size={36} /></IconTab>
        <IconTab><File size={36} /></IconTab>
      </TabStrip>
      <NavButtons><SquarePen size={36} /><FolderPlus size={36} /><ArrowUpNarrowWide size={36} /><ChevronsDownUp size={36} /></NavButtons>
      <Tree>
        {treeItems.map((t, i) => <TreeItem key={t} $on={i === 2}>{t}</TreeItem>)}
        <TreeThumb />
      </Tree>
    </LeftPane>
    <Editor>
      <ViewHeader>
        <HeaderArrow $r={20}><ArrowLeft size={32} /></HeaderArrow>
        <HeaderArrow><ArrowRight size={32} /></HeaderArrow>
        <Crumbs>
          <span>Obsidian-Mind-Garden</span><i>/</i><span>Nicholas</span><i>/</i><span>Math</span><i>/</i><span>Gr</span><i>/</i>
        </Crumbs>
        <Spacer />
        <HeaderTool $c="#9478db"><Bookmark size={33} fill="#9478db" /></HeaderTool>
        <HeaderTool><PenLine size={33} /></HeaderTool>
        <HeaderTool $w={36} $l={10}><EllipsisVertical size={34} /></HeaderTool>
      </ViewHeader>
      <Note>
        <NoteTitle>{"Abelian topological\ngroup is isomorphic to\na direct product of\nopen divisible\nsubgroup and its\nquotient"}</NoteTitle>
        <Rule />
        <TagLine><span>tags:</span><Tag>#Group_theory/Topological</Tag></TagLine>
        <Rule />
        <Callouts>
          <Callout $h={433} $bg="#342524">
            <CalloutTitle $c="#ff6464" $gap={4} $after={6}><FaBook size={36} /><b>Theorem</b><ChevronDown size={32} /></CalloutTitle>
            <div>Let <MathRun><H /></MathRun> be an open divisible subgroup</div>
            <div>of an abelian topological group <MathRun><G /></MathRun>.</div>
            <div>Then <MathRun><G /></MathRun> is topologically isomorphic</div>
            <div>to <MathRun><H /><Sym $w={44} $up>×</Sym><G /><Slash /><H /></MathRun>. And <MathRun><G /><Slash /><H /></MathRun> is a discrete</div>
            <LastLine>topological group.<Foot>[1]</Foot></LastLine>
          </Callout>
          <Callout $h={300} $bg="#1d2635">
            <CalloutTitle $c="#1f75fe" $gap={9} $after={3}><FaAnchor size={39} /><b>Proof</b><ChevronDown size={32} /></CalloutTitle>
            <div>We can consider the identity</div>
          </Callout>
        </Callouts>
      </Note>
      <NoteThumb />
    </Editor>
    <BottomLine />
    <NoteStatus>
      <span>754 notes</span><span>Queue: 366</span><span>0 backlinks</span><span>3 properties</span><span>298 words</span><span>1,821 characters</span>
    </NoteStatus>
  </Vault>
);

const Taskbar = () => (
  <Panel>
    <MenuSlot><MintIcon /></MenuSlot>
    <Launcher $pull={4}><DesktopIcon /></Launcher>
    <Launcher $dot><FolderIcon /></Launcher>
    <Launcher $dot><FirefoxIcon /></Launcher>
    <Launcher><ScriptTile>$W</ScriptTile></Launcher>
    <Launcher $dot><ClockIcon /></Launcher>
    <Launcher $dot><TelegramIcon /></Launcher>
    <Launcher $dot $on><ObsidianIcon /></Launcher>
    <Launcher $dot><GlassesIcon /></Launcher>
    <Spacer />
    <Tray>
      <TraySlot $w={46} $r={22}><Badge><TelegramIcon w={42} /><BadgeCount>..6</BadgeCount></Badge></TraySlot>
      <TraySlot $w={22} $r={22}><Svg w={22} h={32} box="0 0 22 32"><rect width="22" height="32" rx="10" fill="#626262" /><path d="M5 10L17 21L11 27V5L17 11L5 22" fill="none" stroke="#2e2e2e" strokeWidth="2" /></Svg></TraySlot>
      <TraySlot $w={28} $r={18}><Svg w={28} h={32} box="0 0 28 32"><path fillRule="evenodd" d="M3 4H9A5 5 0 0 1 19 4H25Q28 4 28 7V29Q28 32 25 32H3Q0 32 0 29V7Q0 4 3 4ZM4 8V28H24V8H20V10H8V8ZM14 3A1.500 1.500 0 1 0 14 6A1.500 1.500 0 1 0 14 3Z" /><path d="M12 12H16V21H12ZM12 23H16V26H12Z" /></Svg></TraySlot>
      <TraySlot $w={33} $r={24}><Svg w={33} h={32} box="0 0 33 32"><path d="M16 1.500L31 7Q30 24 16 30.500Q2 24 1.500 7Z" fill="none" stroke="currentColor" strokeWidth="3" /><path d="M16 6V26Q7 21 6 10Z" /><path d="M16 6V26Q25 21 26 10Z" fill="#777" /><circle cx="27" cy="26" r="6.500" fill="#dc7138" /></Svg></TraySlot>
      <TraySlot $w={54} $r={23}><FlagIcon /></TraySlot>
      <TraySlot $w={32} $r={20}><MdWifi size={36} /></TraySlot>
      <TraySlot $w={33} $r={24}><Svg w={33} h={32} box="0 0 33 32"><path d="M0 11H5L12 4V28L5 21H0Z" /><path d="M16 10Q19 16 16 22M20 6Q26 16 20 25M25 2Q33 12 27 20" fill="none" stroke="#6c6c6c" strokeWidth="3" /><path d="M23 22L32 31M32 22L23 31" stroke="#e4e4e4" strokeWidth="3" /></Svg></TraySlot>
      <TraySlot $w={28} $r={18}><Svg w={28} h={32} box="0 0 28 32"><path fillRule="evenodd" d="M5 3H8V0H16V3H20Q24 3 24 6V15L20 18V7H4V28H16L15 32H0V3Z" /><path d="M7 10H17V19L13 24V25H7ZM24 17V23H28L19 32V26H15Z" /></Svg></TraySlot>
      <Clock>20:05</Clock>
    </Tray>
  </Panel>
);

export default function App() {
  return (
    <>
      <Global />
      <Screen>
        <FileManager />
        <NotesApp />
        <Taskbar />
      </Screen>
    </>
  );
}
